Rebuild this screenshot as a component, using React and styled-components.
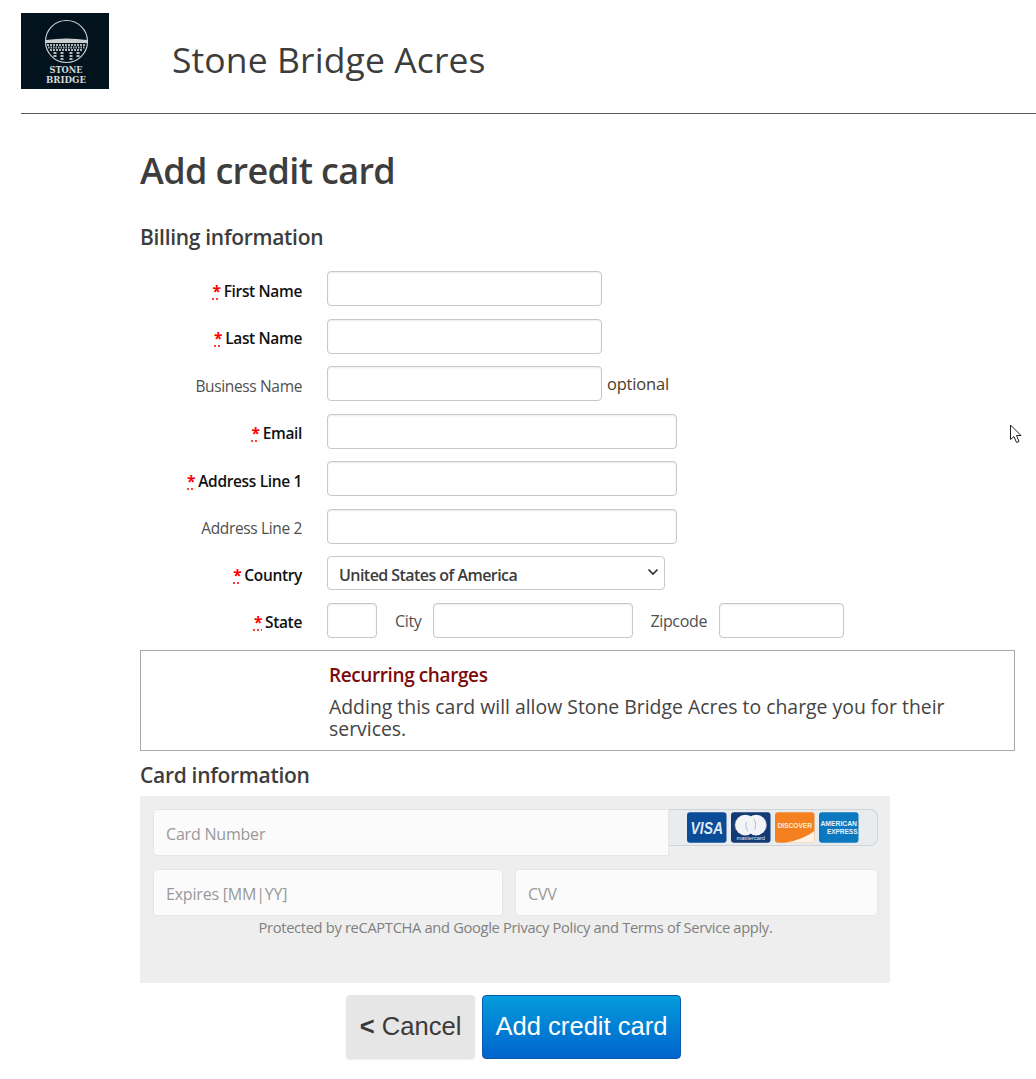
import React from 'react';
import styled, { createGlobalStyle } from 'styled-components';

const GlobalStyle = createGlobalStyle`
  html, body {
    margin: 0;
    padding: 0;
    background: #fff;
    font-family: "Open Sans", "Noto Sans", sans-serif;
    color: #3c3c3c;
  }
  * { box-sizing: border-box; }
`;

const Page = styled.div`
  position: relative;
  width: 1036px;
  height: 1079px;
  overflow: hidden;
`;

const Header = styled.header`
  display: flex;
  align-items: flex-start;
  height: 114px;
  margin-left: 21px;
  padding-top: 13px;
  border-bottom: 1px solid #5a5a5a;
`;

const LogoBox = styled.div`
  width: 88px;
  height: 76px;
  background: #02131d;
  flex-shrink: 0;
`;

const SiteName = styled.div`
  margin: 25px 0 0 63px;
  font-size: 35.5px;
  line-height: 42px;
  font-weight: 400;
  letter-spacing: 0.1px;
  color: #3d3d3d;
`;

const Main = styled.main`
  padding-left: 140px;
  width: 1015px;
`;

const Title = styled.h1`
  margin: 34px 0 0;
  font-size: 36px;
  line-height: 46px;
  font-weight: 600;
  letter-spacing: -0.65px;
  color: #3d3d3d;
`;

const SectionTitle = styled.h2`
  margin: ${(p) => p.$top}px 0 0;
  font-size: 21px;
  line-height: 28px;
  font-weight: 600;
  letter-spacing: -0.3px;
  color: #3d3d3d;
`;

const Rows = styled.div`
  display: flex;
  flex-direction: column;
  margin-top: 20px;
  gap: 12.5px;
`;

const Row = styled.div`
  display: flex;
  align-items: center;
  height: ${(p) => p.$height || 35}px;
`;

const Label = styled.label`
  width: 162px;
  margin-right: 25px;
  padding-top: 4px;
  text-align: right;
  font-size: 15.5px;
  letter-spacing: -0.35px;
  font-weight: ${(p) => (p.$required ? 600 : 400)};
  color: ${(p) => (p.$required ? '#111' : '#505050')};
`;

const Star = styled.abbr`
  margin-right: 3px;
  color: #f00;
  font-weight: 700;
  text-decoration: underline dotted #f00;
  text-underline-offset: 2px;
`;

const TextInput = styled.input`
  width: ${(p) => p.$width}px;
  height: 35px;
  padding: 0 10px;
  background: #fff;
  border: 1px solid #c8c8c8;
  border-radius: 4px;
  box-shadow: inset 0 1px 2px rgba(0, 0, 0, 0.08);
  outline: none;
`;

const Hint = styled.span`
  margin-left: 5px;
  font-size: 16.5px;
  letter-spacing: -0.2px;
  color: #4a3c28;
`;

const InlineLabel = styled.span`
  margin: 0 ${(p) => p.$right}px 0 ${(p) => p.$left}px;
  padding-top: 2px;
  font-size: 16px;
  letter-spacing: -0.35px;
  color: #505050;
`;

const SelectWrap = styled.div`
  position: relative;
  width: 338px;
  height: 34px;
`;

const Select = styled.select`
  appearance: none;
  display: block;
  width: 100%;
  height: 100%;
  padding: 4px 0 0 11px;
  background: #fff;
  border: 1px solid #c8c8c8;
  border-radius: 4px;
  font-family: inherit;
  font-size: 16px;
  font-weight: 600;
  letter-spacing: -0.55px;
  color: #3c3c3c;
  outline: none;
`;

const SelectArrow = styled.svg`
  position: absolute;
  right: 6px;
  top: 12px;
  pointer-events: none;
`;

const Notice = styled.section`
  height: 101px;
  margin-top: 12px;
  padding: 12px 30px 0 188px;
  border: 1px solid #a8a8a8;
`;

const NoticeTitle = styled.div`
  font-size: 19px;
  line-height: 24px;
  font-weight: 600;
  letter-spacing: -0.4px;
  color: #7d0a0a;
`;

const NoticeText = styled.p`
  margin: 9px 0 0;
  font-size: 19.4px;
  line-height: 22px;
  color: #444;
`;

const CardPanel = styled.div`
  width: 750px;
  height: 187px;
  margin-top: 7px;
  padding: 13px 12px 13px 13px;
  background: #eee;
`;

const CardRow = styled.div`
  display: flex;
  align-items: flex-start;
`;

const CardInput = styled.input`
  flex: none;
  width: ${(p) => p.$width}px;
  height: 47px;
  padding: 3px 12px 0;
  background: #fbfbfb;
  border: 1px solid #e6e6e6;
  border-radius: ${(p) => (p.$joined ? '4px 0 0 4px' : '4px')};
  font-family: inherit;
  font-size: 16px;
  letter-spacing: -0.2px;
  outline: none;

  &::placeholder {
    color: #999;
    opacity: 1;
  }
`;

const CardBadges = styled.div`
  display: flex;
  align-items: center;
  gap: 4.5px;
  width: 209px;
  height: 37px;
  padding-left: 18px;
  background: #e9ecef;
  border: 1px solid #ced4da;
  border-left: 0;
  border-radius: 0 8px 8px 0;
`;

const ExpiryRow = styled.div`
  display: flex;
  gap: 12px;
  margin-top: 13px;
`;

const Protected = styled.p`
  margin: 2px 0 0;
  font-size: 14.7px;
  line-height: 19px;
  font-weight: 400;
  text-align: center;
  letter-spacing: -0.33px;
  color: #808080;
`;

const Actions = styled.div`
  display: flex;
  gap: 7px;
  margin: 12px 0 0 206px;
`;

const Button = styled.button`
  height: 64px;
  padding: 0;
  width: ${(p) => p.$width}px;
  font-family: "Liberation Sans", Arial, sans-serif;
  font-size: 25.6px;
  border-radius: 4px;
  cursor: pointer;
`;

const CancelButton = styled(Button)`
  background: #e6e6e6;
  border: 1px solid #e6e6e6;
  color: #3a3a3a;
  box-shadow: 0 1px 2px rgba(0, 0, 0, 0.08);
`;

const SubmitButton = styled(Button)`
  background: linear-gradient(#049cdb, #0064cd);
  border: 1px solid #0a58b0;
  color: #fff;
`;

const Chevron = styled.b`
  font-weight: 700;
`;

const Cursor = styled.svg`
  position: absolute;
  left: 1009px;
  top: 424px;
`;

const Logo = () => (
  <svg width="88" height="76" viewBox="0 0 88 76">
    <circle cx="45.5" cy="28.5" r="21" fill="none" stroke="#c9cdcf" strokeWidth="1.2" />
    <path d="M25 27 Q45.5 24 66 27 L66 30 L25 30 Z" fill="#c9cdcf" />
    <path d="M26 32 L65 32" stroke="#aeb3b6" strokeWidth="2" strokeDasharray="2 1" />
    <path d="M27 34.5 L64 34.5" stroke="#aeb3b6" strokeWidth="2" strokeDasharray="1.5 1" />
    <path d="M29 37 L62 37" stroke="#aeb3b6" strokeWidth="2" strokeDasharray="2 1" />
    <path d="M34 39 L34 44 M41 39 L41 48 M50 39 L50 48 M57 39 L57 44" stroke="#b5babd" strokeWidth="3" strokeDasharray="2 1" fill="none" />
    <text x="45" y="60" textAnchor="middle" textLength="33" lengthAdjust="spacingAndGlyphs" fontFamily="DejaVu Serif, serif" fontWeight="700" fontSize="9.5" fill="#d4d7d9">STONE</text>
    <text x="45" y="70" textAnchor="middle" textLength="40" lengthAdjust="spacingAndGlyphs" fontFamily="DejaVu Serif, serif" fontWeight="700" fontSize="9.5" fill="#d4d7d9">BRIDGE</text>
  </svg>
);

const Visa = () => (
  <svg width="39.5" height="31" viewBox="0 0 40 31">
    <rect width="40" height="31" rx="3" fill="#0a4c97" />
    <text x="20" y="22" textAnchor="middle" textLength="33" lengthAdjust="spacingAndGlyphs" fontFamily="Liberation Sans, sans-serif" fontStyle="italic" fontWeight="700" fontSize="16" fill="#dfe8f2">VISA</text>
  </svg>
);

const Mastercard = () => (
  <svg width="39.5" height="31" viewBox="0 0 40 31">
    <rect width="40" height="31" rx="3" fill="#123a75" />
    <circle cx="14.5" cy="13" r="10.5" fill="#f2f4f7" />
    <circle cx="25.5" cy="13" r="10.5" fill="#f2f4f7" />
    <circle cx="14.5" cy="13" r="10.5" fill="none" stroke="#b08aa0" strokeWidth="0.6" strokeDasharray="10 22" strokeDashoffset="5" />
    <circle cx="25.5" cy="13" r="10.5" fill="none" stroke="#8a8fc0" strokeWidth="0.6" strokeDasharray="10 22" strokeDashoffset="38" />
    <text x="20" y="28.5" textAnchor="middle" textLength="29" lengthAdjust="spacingAndGlyphs" fontFamily="Liberation Sans, sans-serif" fontSize="6" fill="#e3e7ef">mastercard</text>
  </svg>
);

const Discover = () => (
  <svg width="39.5" height="31" viewBox="0 0 40 31">
    <rect width="40" height="31" rx="3" fill="#f5801f" />
    <path d="M10 31 Q28 28 40 19 L40 28 Q40 31 37 31 Z" fill="#fdf3e8" />
    <text x="20" y="16" textAnchor="middle" textLength="35" lengthAdjust="spacingAndGlyphs" fontFamily="Liberation Sans, sans-serif" fontWeight="700" fontSize="7.4" fill="#fdebd8">DISCOVER</text>
  </svg>
);

const Amex = () => (
  <svg width="39.5" height="31" viewBox="0 0 40 31">
    <rect width="40" height="31" rx="3" fill="#0b78bf" />
    <text x="20" y="14" textAnchor="middle" textLength="37" lengthAdjust="spacingAndGlyphs" fontFamily="Liberation Sans, sans-serif" fontWeight="700" fontSize="6.8" fill="#e6f2fa">AMERICAN</text>
    <text x="23.5" y="22" textAnchor="middle" textLength="31" lengthAdjust="spacingAndGlyphs" fontFamily="Liberation Sans, sans-serif" fontWeight="700" fontSize="6.5" fill="#e6f2fa">EXPRESS</text>
  </svg>
);

const Required = ({ children }) => (
  <Label $required>
    <Star title="required">*</Star>
    {children}
  </Label>
);

export default function App() {
  return (
    <Page>
      <GlobalStyle />
      <Header>
        <LogoBox>
          <Logo />
        </LogoBox>
        <SiteName>Stone Bridge Acres</SiteName>
      </Header>
      <Main>
        <Title>Add credit card</Title>
        <SectionTitle $top={29}>Billing information</SectionTitle>
        <Rows>
          <Row>
            <Required>First Name</Required>
            <TextInput $width={275} />
          </Row>
          <Row>
            <Required>Last Name</Required>
            <TextInput $width={275} />
          </Row>
          <Row>
            <Label>Business Name</Label>
            <TextInput $width={275} />
            <Hint>optional</Hint>
          </Row>
          <Row>
            <Required>Email</Required>
            <TextInput $width={350} />
          </Row>
          <Row>
            <Required>Address Line 1</Required>
            <TextInput $width={350} />
          </Row>
          <Row>
            <Label>Address Line 2</Label>
            <TextInput $width={350} />
          </Row>
          <Row $height={34}>
            <Required>Country</Required>
            <SelectWrap>
              <Select defaultValue="us">
                <option value="us">United States of America</option>
              </Select>
              <SelectArrow width="12" height="8" viewBox="0 0 12 8">
                <path d="M1.5 1.5 L6 6 L10.5 1.5" fill="none" stroke="#333" strokeWidth="1.7" />
              </SelectArrow>
            </SelectWrap>
          </Row>
          <Row>
            <Required>State</Required>
            <TextInput $width={50} />
            <InlineLabel $left={18} $right={12}>City</InlineLabel>
            <TextInput $width={200} />
            <InlineLabel $left={17} $right={12}>Zipcode</InlineLabel>
            <TextInput $width={125} />
          </Row>
        </Rows>
        <Notice>
          <NoticeTitle>Recurring charges</NoticeTitle>
          <NoticeText>Adding this card will allow Stone Bridge Acres to charge you for their services.</NoticeText>
        </Notice>
        <SectionTitle $top={10}>Card information</SectionTitle>
        <CardPanel>
          <CardRow>
            <CardInput $width={516} $joined placeholder="Card Number" />
            <CardBadges>
              <Visa />
              <Mastercard />
              <Discover />
              <Amex />
            </CardBadges>
          </CardRow>
          <ExpiryRow>
            <CardInput $width={350} placeholder="Expires [MM|YY]" />
            <CardInput $width={363} placeholder="CVV" />
          </ExpiryRow>
          <Protected>Protected by reCAPTCHA and Google Privacy Policy and Terms of Service apply.</Protected>
        </CardPanel>
        <Actions>
          <CancelButton $width={129}><Chevron>&lt;</Chevron> Cancel</CancelButton>
          <SubmitButton $width={199}>Add credit card</SubmitButton>
        </Actions>
      </Main>
      <Cursor width="14" height="20" viewBox="0 0 14 20">
        <path d="M1.5 1 L1.5 15.5 L5 12.5 L7.5 18.5 L10 17.5 L7.5 11.5 L12 11.5 Z" fill="#fff" stroke="#222" strokeWidth="1" />
      </Cursor>
    </Page>
  );
}
